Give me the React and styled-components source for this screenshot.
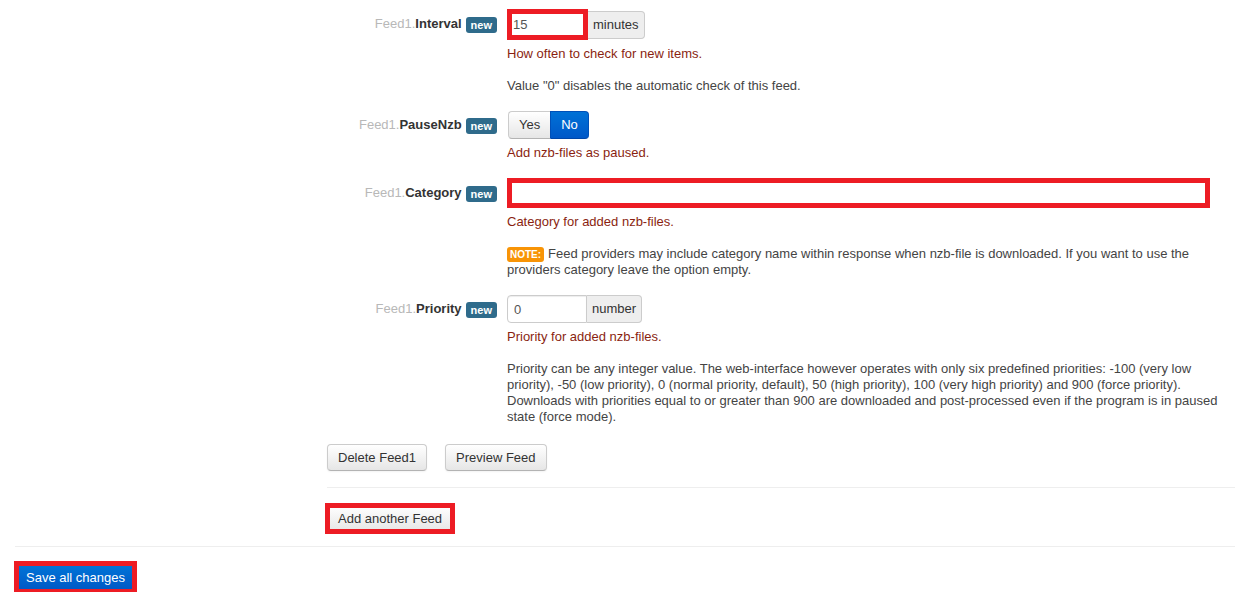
import styled, { createGlobalStyle } from 'styled-components';

const GlobalStyle = createGlobalStyle`
  html, body {
    margin: 0;
    padding: 0;
    background: #fff;
  }
  body {
    font-family: "Liberation Sans", Arial, sans-serif;
    font-size: 13px;
    color: #333;
  }
`;

const RED = '#ed1c24';

const buildOptions = () => [
  {
    name: 'Interval',
    control: (
      <InputGroup>
        <TextInput defaultValue="15" width={81} marked />
        <AddOn>minutes</AddOn>
      </InputGroup>
    ),
    help: 'How often to check for new items.',
    text: ['Value "0" disables the automatic check of this feed.'],
  },
  {
    name: 'PauseNzb',
    control: (
      <Toggle>
        <ToggleButton>Yes</ToggleButton>
        <ToggleButton active>No</ToggleButton>
      </Toggle>
    ),
    help: 'Add nzb-files as paused.',
  },
  {
    name: 'Category',
    control: <TextInput defaultValue="" width={703} height={30} marked />,
    help: 'Category for added nzb-files.',
    note: 'Feed providers may include category name within response when nzb-file is downloaded. If you want to use the providers category leave the option empty.',
  },
  {
    name: 'Priority',
    control: (
      <InputGroup>
        <TextInput defaultValue="0" width={80} />
        <AddOn>number</AddOn>
      </InputGroup>
    ),
    help: 'Priority for added nzb-files.',
    text: [
      'Priority can be any integer value. The web-interface however operates with only six predefined priorities: -100 (very low priority), -50 (low priority), 0 (normal priority, default), 50 (high priority), 100 (very high priority) and 900 (force priority). Downloads with priorities equal to or greater than 900 are downloaded and post-processed even if the program is in paused state (force mode).',
    ],
  },
];

export default function App() {
  const options = buildOptions();
  return (
    <>
      <GlobalStyle />
      <Page>
        <FeedSection>
          {options.map(opt => (
            <OptionRow key={opt.name}>
              <OptionLabel>
                <Prefix>Feed1.</Prefix>
                <OptionName>{opt.name}</OptionName>
                <NewBadge>new</NewBadge>
              </OptionLabel>
              <ControlCell>{opt.control}</ControlCell>
              <HelpCell>
                <Hint>{opt.help}</Hint>
                {opt.text &&
                  opt.text.map((t, i) => <Description key={i}>{t}</Description>)}
                {opt.note && (
                  <Description>
                    <NoteBadge>NOTE:</NoteBadge>
                    {opt.note}
                  </Description>
                )}
              </HelpCell>
            </OptionRow>
          ))}
          <ButtonRow>
            <Button>Delete Feed1</Button>
            <Button>Preview Feed</Button>
          </ButtonRow>
          <Divider space={16} />
          <AddRow>
            <Button marked>Add another Feed</Button>
          </AddRow>
        </FeedSection>
        <Divider space={14} />
        <SaveRow>
          <SaveButton>Save all changes</SaveButton>
        </SaveRow>
      </Page>
    </>
  );
}

const Page = styled.div`
  padding: 9px 7px 0 15px;
`;

const FeedSection = styled.div`
  margin-left: 312px;
`;

const OptionRow = styled.div`
  display: grid;
  grid-template-columns: 170px 1fr;
  column-gap: 10px;
  margin-bottom: 17px;
`;

const OptionLabel = styled.div`
  grid-row: 1;
  grid-column: 1;
  align-self: center;
  text-align: right;
  white-space: nowrap;
  line-height: 16px;
`;

const Prefix = styled.span`
  color: #b8b8b8;
`;

const OptionName = styled.span`
  font-weight: bold;
  color: #333;
`;

const NewBadge = styled.span`
  display: inline-block;
  margin-left: 4px;
  padding: 0 5px;
  height: 16px;
  line-height: 16px;
  font-size: 11px;
  font-weight: bold;
  color: #fff;
  background: #2f6b8b;
  border-radius: 3px;
  vertical-align: -1px;
`;

const ControlCell = styled.div`
  grid-row: 1;
  grid-column: 2;
  display: flex;
  align-items: center;
`;

const HelpCell = styled.div`
  grid-row: 2;
  grid-column: 2;
  margin-top: 6px;
  padding-right: 15px;
  line-height: 16px;
`;

const Hint = styled.div`
  color: #8a1f11;
`;

const Description = styled.div`
  margin-top: 16px;
  color: #444;
`;

const NoteBadge = styled.span`
  display: inline-block;
  margin-right: 4px;
  padding: 0 3px;
  height: 15px;
  line-height: 15px;
  font-size: 10px;
  font-weight: bold;
  color: #fff;
  background: #f89406;
  border-radius: 3px;
  vertical-align: 0;
`;

const InputGroup = styled.div`
  display: flex;
  align-items: center;
`;

const TextInput = styled.input`
  box-sizing: border-box;
  width: ${p => p.width}px;
  height: ${p => p.height || (p.marked ? 31 : 28)}px;
  padding: 0 6px;
  font-family: inherit;
  font-size: 13px;
  color: #555;
  background: #fff;
  border: ${p => (p.marked ? 'none' : '1px solid #ccc')};
  border-radius: ${p => (p.marked ? '0' : '4px 0 0 4px')};
  box-shadow: ${p =>
    p.marked ? `inset 0 0 0 5px ${RED}` : 'inset 0 1px 1px rgba(0,0,0,.075)'};
  outline: none;
`;

const AddOn = styled.span`
  box-sizing: border-box;
  height: 28px;
  line-height: 26px;
  padding: 0 5px;
  color: #333;
  background: #eee;
  border: 1px solid #ccc;
  border-left: none;
  border-radius: 0 4px 4px 0;
  white-space: nowrap;
`;

const Toggle = styled.div`
  display: flex;
  margin-left: 1px;
`;

const ToggleButton = styled.span`
  box-sizing: border-box;
  height: 28px;
  line-height: 26px;
  padding: 0 10px;
  color: ${p => (p.active ? '#fff' : '#333')};
  background: ${p =>
    p.active
      ? 'linear-gradient(#0071d6, #0058c8)'
      : 'linear-gradient(#ffffff, #e6e6e6)'};
  border: 1px solid ${p => (p.active ? '#0050b8' : '#ccc')};
  border-bottom-color: ${p => (p.active ? '#0046a8' : '#b3b3b3')};
  &:first-child {
    border-radius: 4px 0 0 4px;
    border-right: none;
  }
  &:last-child {
    border-radius: 0 4px 4px 0;
  }
`;

const ButtonRow = styled.div`
  display: flex;
  gap: 18px;
  margin-top: 19px;
`;

const Button = styled.button`
  box-sizing: border-box;
  height: 27px;
  padding: 0 10px;
  font-family: inherit;
  font-size: 13px;
  color: #333;
  background: linear-gradient(#ffffff, #e6e6e6);
  border: 1px solid ${p => (p.marked ? RED : '#ccc')};
  border-bottom-color: ${p => (p.marked ? RED : '#b3b3b3')};
  border-radius: ${p => (p.marked ? '0' : '4px')};
  box-shadow: ${p =>
    p.marked
      ? `0 0 0 2px ${RED}, inset 0 0 0 2px ${RED}`
      : 'inset 0 1px 0 rgba(255,255,255,.2), 0 1px 2px rgba(0,0,0,.05)'};
`;

const Divider = styled.div`
  height: 1px;
  background: #eee;
  margin-top: ${p => p.space}px;
`;

const AddRow = styled.div`
  display: flex;
  padding-top: 17px;
`;

const SaveRow = styled.div`
  display: flex;
  padding: 16px 0 0 1px;
`;

const SaveButton = styled.button`
  box-sizing: border-box;
  height: 29px;
  padding: 0 10px;
  font-family: inherit;
  font-size: 13px;
  color: #fff;
  background: linear-gradient(#0077d9, #0056c4);
  border: none;
  border-radius: 0;
  box-shadow: 0 0 0 2px ${RED}, inset 0 0 0 3px ${RED};
`;
